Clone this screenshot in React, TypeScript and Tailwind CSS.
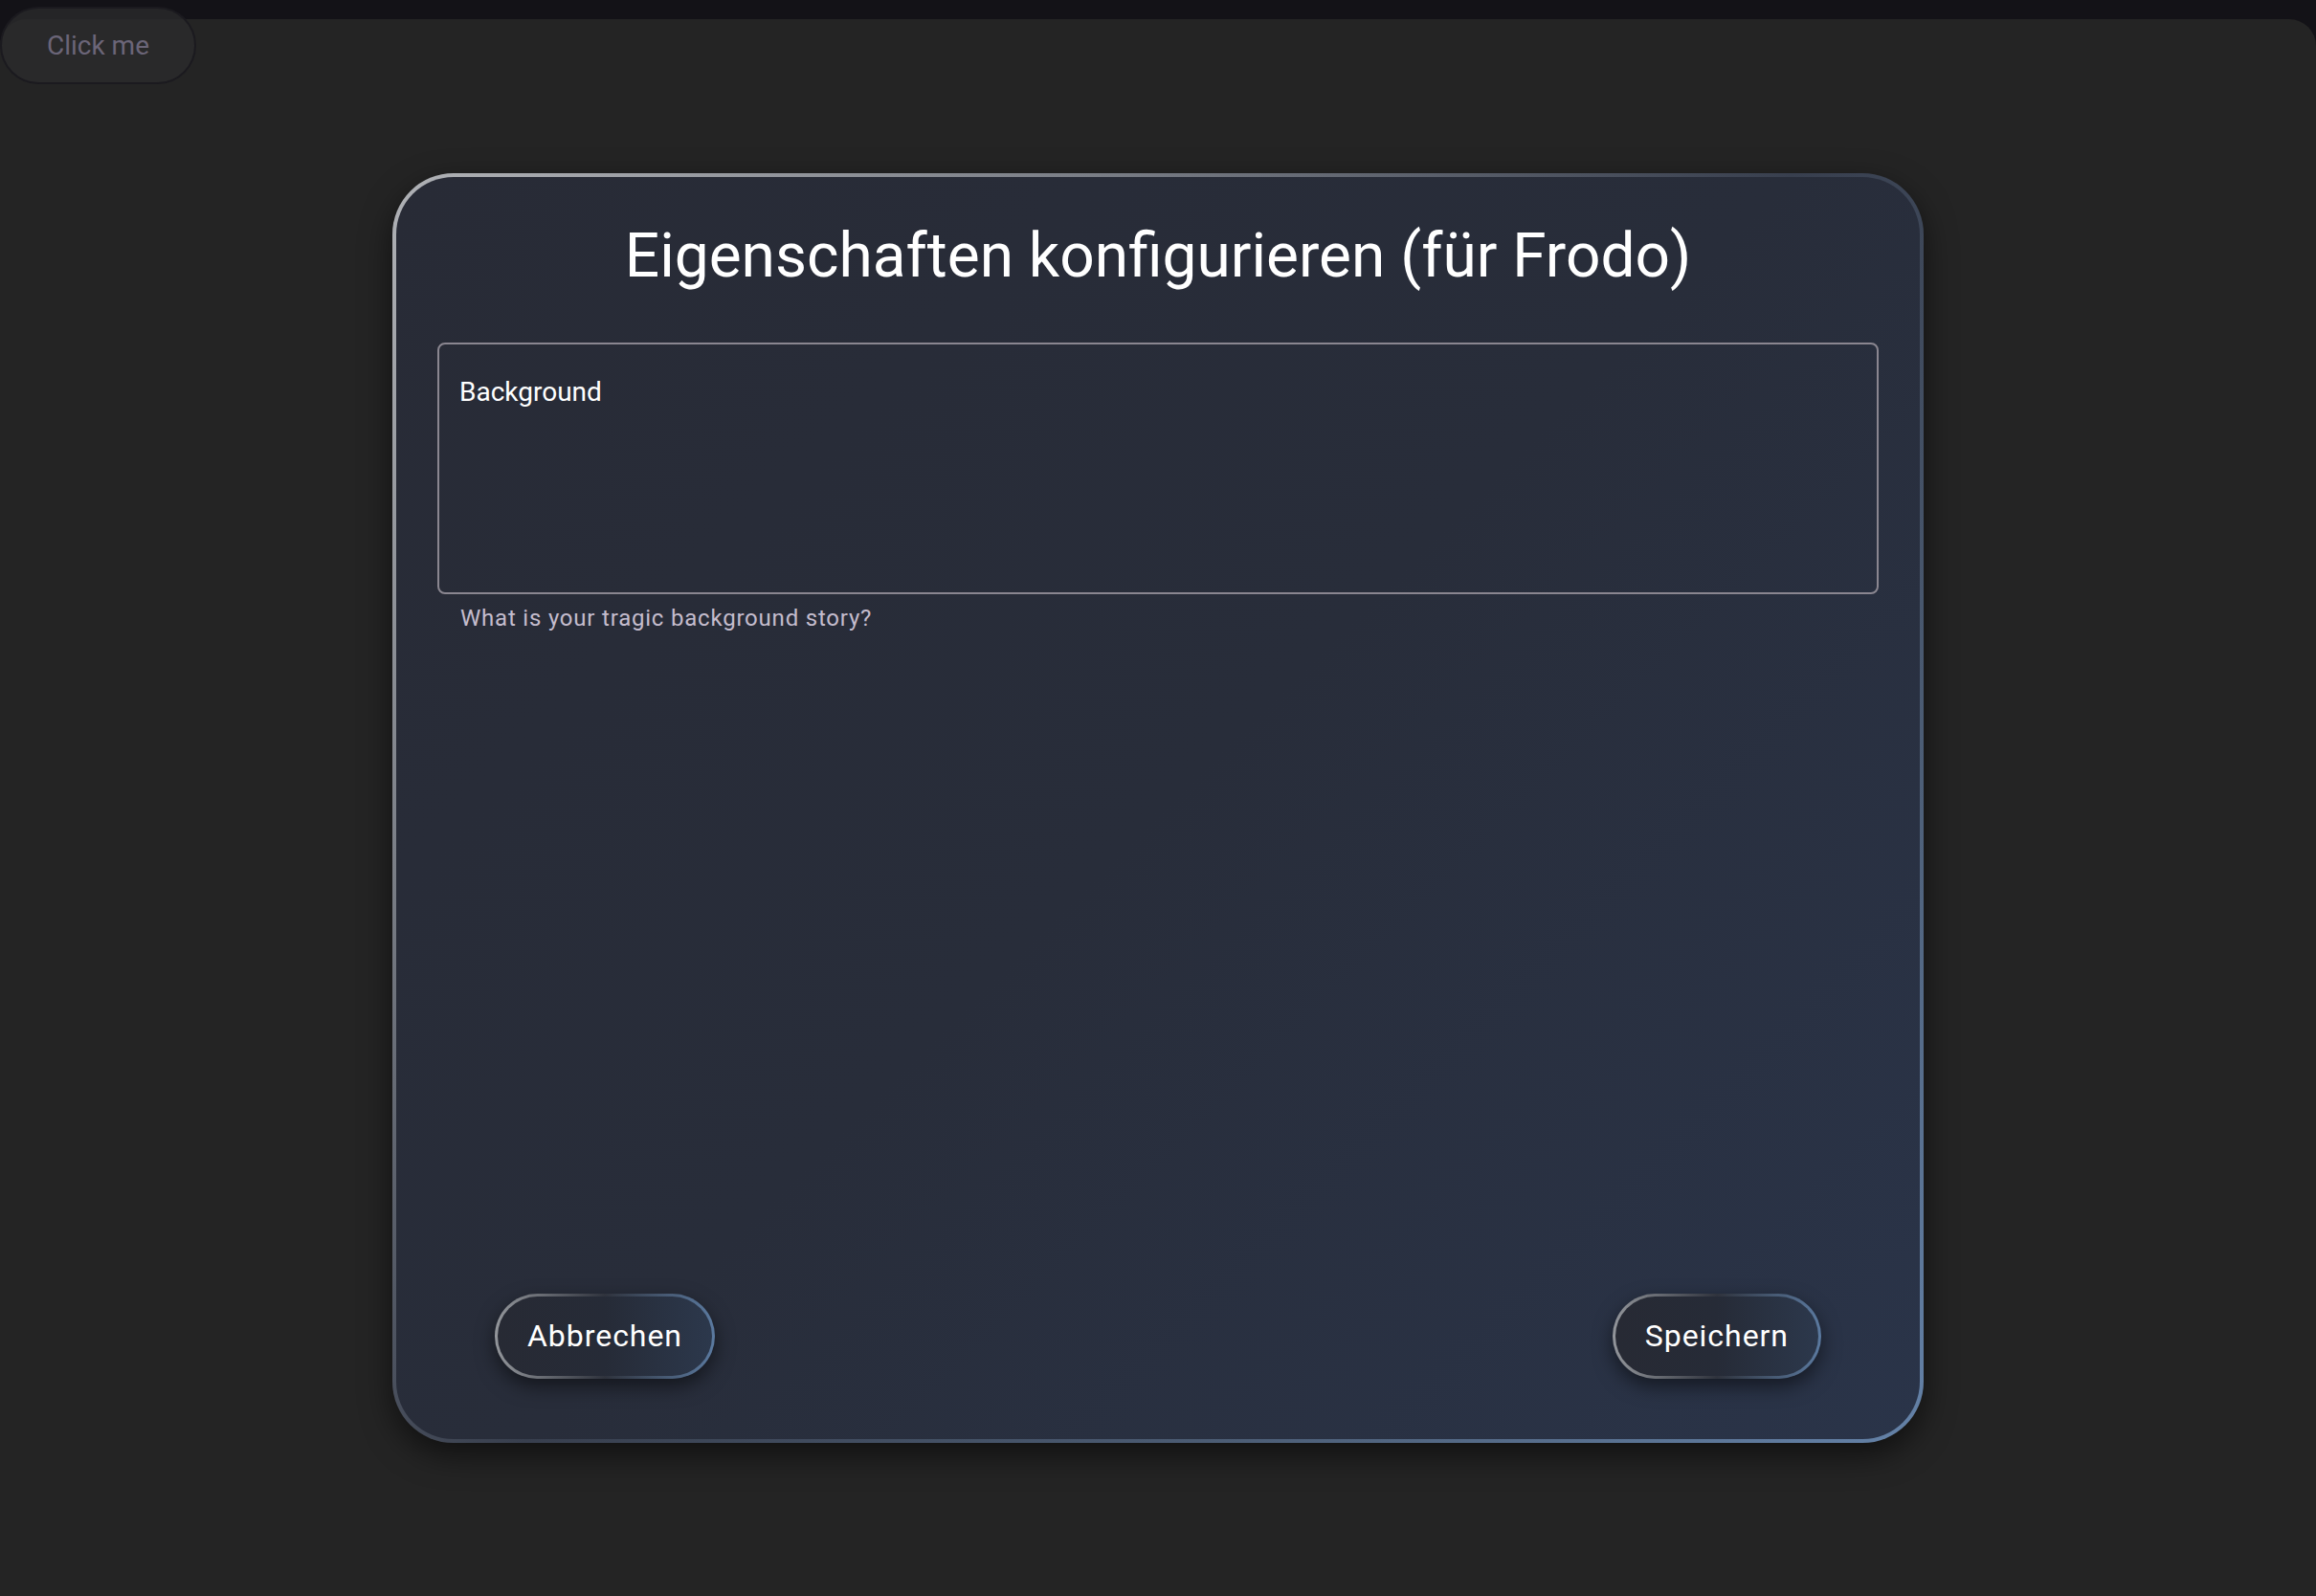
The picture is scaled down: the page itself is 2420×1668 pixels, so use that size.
import { useState } from "react";

export default function App() {
  const [story, setStory] = useState("Background");

  return (
    <div className="relative flex flex-col min-h-[1668px] bg-[#131217] pt-[20px] font-['Roboto','Liberation_Sans',sans-serif]">
      {/* floating trigger button */}
      <button className="absolute left-0 top-[7px] z-10 flex h-[81px] w-[205px] items-center justify-center rounded-full border-2 border-[#1b1a1f] bg-[#2a2a2c]/80 text-[28px] text-[#6b6578]">
        Click me
      </button>

      <div className="flex flex-1 items-center justify-center rounded-t-[28px] bg-[#242424]">
        <div className="flex h-[1327px] w-[1600px] flex-col rounded-[64px] border-4 border-transparent px-[43px] pt-[41px] pb-[63px] shadow-[0_12px_32px_rgba(0,0,0,0.55)] [background:linear-gradient(135deg,#282b36,#282d3a_50%,#2a3449)_padding-box,linear-gradient(135deg,#b0b2b6_0%,#7a7e86_25%,#383f4e_50%,#4c5d75_75%,#6482a8_100%)_border-box]">
          <h2 className="text-center text-[64px] leading-[84px] text-white">
            Eigenschaften konfigurieren (für Frodo)
          </h2>

          <div className="mt-[48px] flex flex-col">
            <textarea
              value={story}
              onChange={(e) => setStory(e.target.value)}
              className="h-[263px] w-full resize-none rounded-[8px] border-2 border-[#8a8690] bg-transparent px-[21px] pt-[30px] text-[28px] leading-[40px] text-white outline-none"
            />
            <p className="mt-[5px] pl-[24px] text-[24px] leading-[40px] tracking-[0.033em] text-[#c4bccd]">
              What is your tragic background story?
            </p>
          </div>

          <div className="mt-auto flex items-center justify-between px-[60px]">
            <button className="h-[89px] rounded-full border-[3px] border-transparent px-[31px] text-[32px] tracking-[0.03em] text-white shadow-[0_8px_20px_rgba(0,0,0,0.5)] [background:linear-gradient(90deg,#272a34,#262b37_50%,#2c384c)_padding-box,linear-gradient(90deg,#93969b,#2f333d_50%,#5b7aa0)_border-box]">
              Abbrechen
            </button>
            <button className="h-[89px] rounded-full border-[3px] border-transparent px-[31px] text-[32px] tracking-[0.03em] text-white shadow-[0_8px_20px_rgba(0,0,0,0.5)] [background:linear-gradient(90deg,#272a34,#262b37_50%,#2c384c)_padding-box,linear-gradient(90deg,#93969b,#2f333d_50%,#5b7aa0)_border-box]">
              Speichern
            </button>
          </div>
        </div>
      </div>
    </div>
  );
}
